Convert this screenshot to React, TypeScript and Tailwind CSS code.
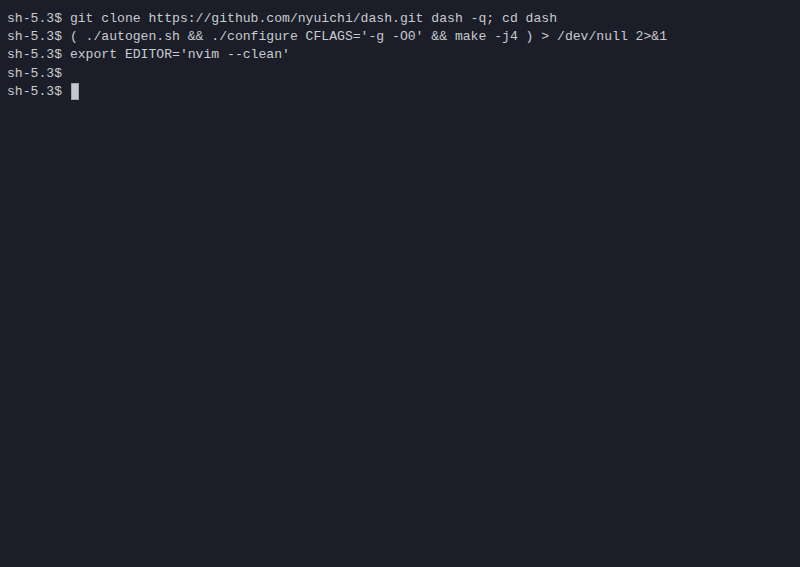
export default function App() {
  const lines = [
    "git clone https://github.com/nyuichi/dash.git dash -q; cd dash",
    "( ./autogen.sh && ./configure CFLAGS='-g -O0' && make -j4 ) > /dev/null 2>&1",
    "export EDITOR='nvim --clean'",
    "",
  ];

  return (
    <div className="h-[567px] w-[800px] overflow-hidden bg-[#1b1e28] pl-[7px] pt-[10px] font-['Liberation_Mono',monospace] text-[13.1px] leading-[18.2px] text-[#c9cbd0]">
      {lines.map((cmd, i) => (
        <div key={i} className="whitespace-pre">
          sh-5.3$ {cmd}
        </div>
      ))}
      <div className="flex items-center whitespace-pre">
        <span>sh-5.3$ </span>
        <span className="ml-[1px] h-[17px] w-[8px] border border-[#9ea3ad] bg-[#c3c7cf]" />
      </div>
    </div>
  );
}
